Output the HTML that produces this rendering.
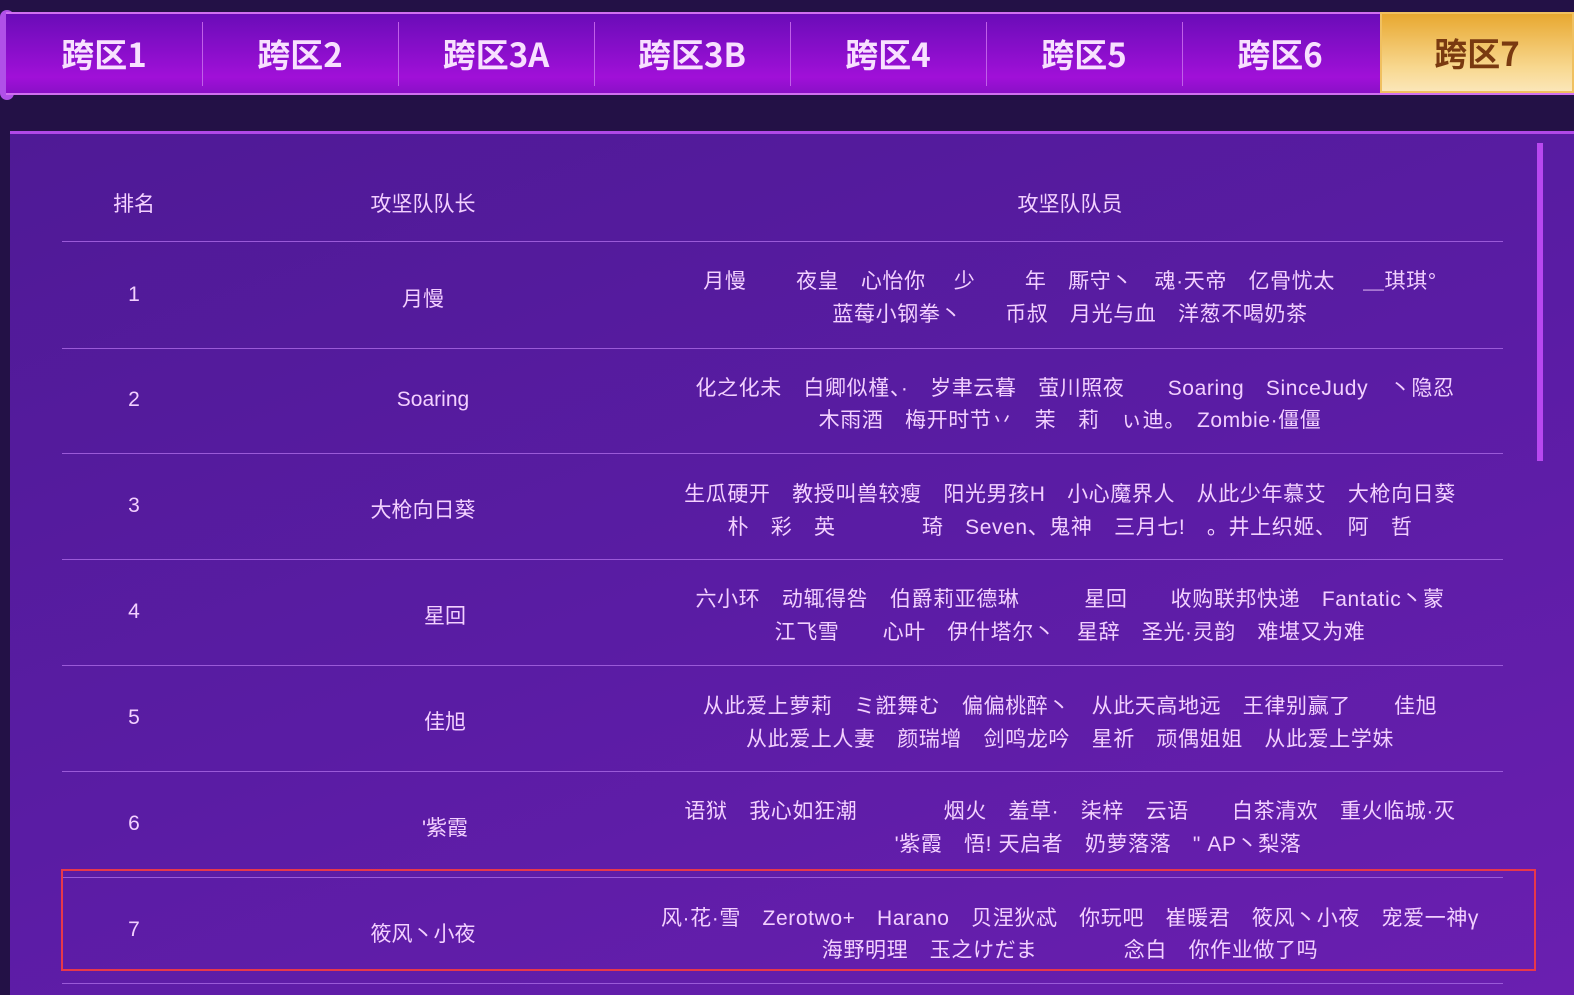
<!DOCTYPE html><html><head><meta charset="utf-8"><style>
body{margin:0;width:1574px;height:992px;overflow:hidden;background:#231146;font-family:"Liberation Sans","Noto Sans CJK SC",sans-serif;position:relative}
.tabs{position:absolute;left:6px;top:12px;width:1568px;height:83px;background:linear-gradient(180deg,#6a0cb8,#a010d8 80%,#8a10c8);border-top:2px solid #d070f0;border-bottom:2px solid #d070f0;box-sizing:border-box}
.tab{position:absolute;top:0;height:79px;width:196px;text-align:center;line-height:79px;font-size:33px;font-weight:bold;color:#f8e0ff;font-family:"Noto Sans CJK SC",sans-serif}
.sep{position:absolute;top:8px;width:1px;height:64px;background:#c060e8}
.t7{background:linear-gradient(180deg,#e8a830,#f8d890 70%,#fbe6b8);color:#7a3a10;border:2px solid #f0c060;top:-2px;height:81px;box-sizing:border-box;line-height:77px}
.panel{position:absolute;left:10px;top:131px;width:1564px;height:861px;background:linear-gradient(160deg,#4f1a96,#5a1ca4 50%,#6a1fb0);border-top:3px solid #b048e8}
.scroll{position:absolute;left:1537px;top:143px;width:6px;height:318px;background:#b848f0}
.t{position:absolute;color:#f3d0ff;font-size:21px;white-space:pre;text-align:center;transform:translateX(-50%);font-family:"Liberation Sans","Noto Sans CJK SC",sans-serif}
.m{letter-spacing:0.6px}
.ln{position:absolute;left:62px;width:1441px;height:1px;background:#9a5ad8}
.red{position:absolute;left:61px;top:869px;width:1475px;height:102px;border:2px solid #e8384a;box-sizing:border-box}
.flare{position:absolute;left:0;top:10px;width:14px;height:90px;background:#b050e8;border-radius:8px}
</style></head><body>
<div class="flare"></div>
<div class="tabs">
<div class="tab" style="left:0">跨区1</div><div class="sep" style="left:196px"></div>
<div class="tab" style="left:196px">跨区2</div><div class="sep" style="left:392px"></div>
<div class="tab" style="left:392px">跨区3A</div><div class="sep" style="left:588px"></div>
<div class="tab" style="left:588px">跨区3B</div><div class="sep" style="left:784px"></div>
<div class="tab" style="left:784px">跨区4</div><div class="sep" style="left:980px"></div>
<div class="tab" style="left:980px">跨区5</div><div class="sep" style="left:1176px"></div>
<div class="tab" style="left:1176px">跨区6</div>
<div class="tab t7" style="left:1374px;width:194px">跨区7</div>
</div>
<div class="panel"></div>
<div class="scroll"></div>
<div class="t" style="left:134px;top:188px">排名</div>
<div class="t" style="left:423px;top:188px">攻坚队队长</div>
<div class="t" style="left:1070px;top:188px">攻坚队队员</div>
<div class="ln" style="top:241px"></div>
<div class="t" style="left:134px;top:283px">1</div><div class="t" style="left:423px;top:283px">月慢</div>
<div class="t m" style="left:1070px;top:265px">月慢　　 夜皇　心怡你　 少　　 年　厮守丶　魂·天帝　亿骨忧太　 ＿琪琪°</div>
<div class="t m" style="left:1070px;top:298px">蓝莓小钢拳丶　　币叔　月光与血　洋葱不喝奶茶</div>
<div class="ln" style="top:348px"></div>
<div class="t" style="left:134px;top:388px">2</div><div class="t" style="left:433px;top:388px">Soaring</div>
<div class="t m" style="left:1075px;top:372px">化之化未　白卿似槿、·　岁聿云暮　萤川照夜　　Soaring　SinceJudy　丶隐忍</div>
<div class="t m" style="left:1070px;top:404px">木雨酒　梅开时节丷　茉　莉　ぃ迪。　Zombie·僵僵</div>
<div class="ln" style="top:453px"></div>
<div class="t" style="left:134px;top:494px">3</div><div class="t" style="left:423px;top:494px">大枪向日葵</div>
<div class="t m" style="left:1070px;top:478px">生瓜硬开　教授叫兽较瘦　阳光男孩H　小心魔界人　从此少年慕艾　大枪向日葵</div>
<div class="t m" style="left:1070px;top:511px">朴　彩　英　　　　琦　Seven、鬼神　三月七!　。井上织姬、　阿　哲</div>
<div class="ln" style="top:559px"></div>
<div class="t" style="left:134px;top:600px">4</div><div class="t" style="left:445px;top:600px">星回</div>
<div class="t m" style="left:1070px;top:583px">六小环　动辄得咎　伯爵莉亚德琳　　　星回　　收购联邦快递　Fantatic丶蒙</div>
<div class="t m" style="left:1070px;top:616px">江飞雪　　心叶　伊什塔尔丶　星辞　圣光·灵韵　难堪又为难</div>
<div class="ln" style="top:665px"></div>
<div class="t" style="left:134px;top:706px">5</div><div class="t" style="left:445px;top:706px">佳旭</div>
<div class="t m" style="left:1070px;top:690px">从此爱上萝莉　ミ誑舞む　偏偏桃醉丶　从此天高地远　王律别赢了　　佳旭</div>
<div class="t m" style="left:1070px;top:723px">从此爱上人妻　颜瑞增　剑鸣龙吟　星祈　顽偶姐姐　从此爱上学妹</div>
<div class="ln" style="top:771px"></div>
<div class="t" style="left:134px;top:812px">6</div><div class="t" style="left:445px;top:812px">'紫霞</div>
<div class="t m" style="left:1070px;top:795px">语狱　我心如狂潮　　　　烟火　羞草·　柒梓　云语　　白茶清欢　重火临城·灭</div>
<div class="t m" style="left:1098px;top:828px">'紫霞　悟! 天启者　奶萝落落　" AP丶梨落</div>
<div class="ln" style="top:877px"></div>
<div class="red"></div>
<div class="t" style="left:134px;top:918px">7</div><div class="t" style="left:423px;top:918px">筱风丶小夜</div>
<div class="t m" style="left:1070px;top:902px">风·花·雪　Zerotwo+　Harano　贝涅狄忒　你玩吧　崔暖君　筱风丶小夜　宠爱一神γ</div>
<div class="t m" style="left:1070px;top:934px">海野明理　玉之けだま　　　　念白　你作业做了吗</div>
<div class="ln" style="top:983px"></div>
</body></html>
